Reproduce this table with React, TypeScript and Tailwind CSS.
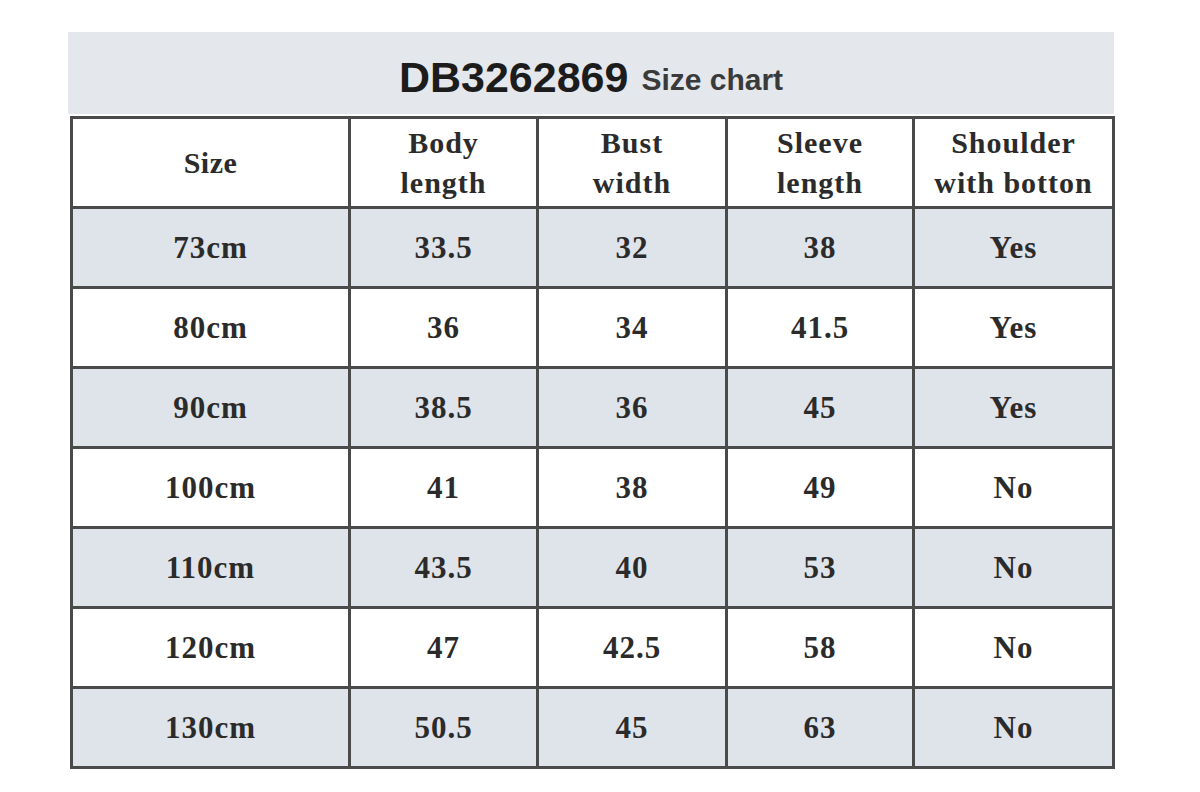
import React from "react";

const rows = [
  ["73cm", "33.5", "32", "38", "Yes"],
  ["80cm", "36", "34", "41.5", "Yes"],
  ["90cm", "38.5", "36", "45", "Yes"],
  ["100cm", "41", "38", "49", "No"],
  ["110cm", "43.5", "40", "53", "No"],
  ["120cm", "47", "42.5", "58", "No"],
  ["130cm", "50.5", "45", "63", "No"],
];

export default function App() {
  return (
    <div className="w-[1200px] h-[792px] bg-white pt-[32px] pl-[68px] overflow-hidden">
      <div className="w-[1046px] h-[82px] bg-[#e4e7ec] flex items-center justify-center pt-[8px] gap-[13px]">
        <span className="text-[43px] font-bold text-[#1c1c1c] leading-none" style={{ fontFamily: '"Liberation Sans", Arial, sans-serif' }}>
          DB3262869
        </span>
        <span className="text-[30px] font-bold text-[#3a3a3a] leading-none mt-[6px]" style={{ fontFamily: '"Liberation Sans", Arial, sans-serif' }}>
          Size chart
        </span>
      </div>
      <table
        className="border-collapse ml-[2px] mt-[2px] text-[#2b2b2b] font-bold"
        style={{ fontFamily: '"Liberation Serif", "Times New Roman", serif' }}
      >
        <colgroup>
          <col className="w-[278px]" />
          <col className="w-[188px]" />
          <col className="w-[189px]" />
          <col className="w-[187px]" />
          <col className="w-[200px]" />
        </colgroup>
        <thead>
          <tr className="h-[90px] bg-white">
            <th className="border-[3px] border-[#4a4a4a] text-[30px] leading-[40px] font-bold tracking-[0.5px]">Size</th>
            <th className="border-[3px] border-[#4a4a4a] text-[30px] leading-[40px] font-bold tracking-[1px]">Body<br />length</th>
            <th className="border-[3px] border-[#4a4a4a] text-[30px] leading-[40px] font-bold tracking-[1px]">Bust<br />width</th>
            <th className="border-[3px] border-[#4a4a4a] text-[30px] leading-[40px] font-bold tracking-[1px]">Sleeve<br />length</th>
            <th className="border-[3px] border-[#4a4a4a] text-[30px] leading-[40px] font-bold tracking-[1px]">Shoulder<br />with botton</th>
          </tr>
        </thead>
        <tbody>
          {rows.map((r, i) => (
            <tr key={i} className={i % 2 === 0 ? "h-[80px] bg-[#dfe3ea]" : "h-[80px] bg-white"}>
              {r.map((c, j) => (
                <td key={j} className="border-[3px] border-[#4a4a4a] text-center text-[31px] tracking-[1px] leading-none">
                  {c}
                </td>
              ))}
            </tr>
          ))}
        </tbody>
      </table>
    </div>
  );
}
